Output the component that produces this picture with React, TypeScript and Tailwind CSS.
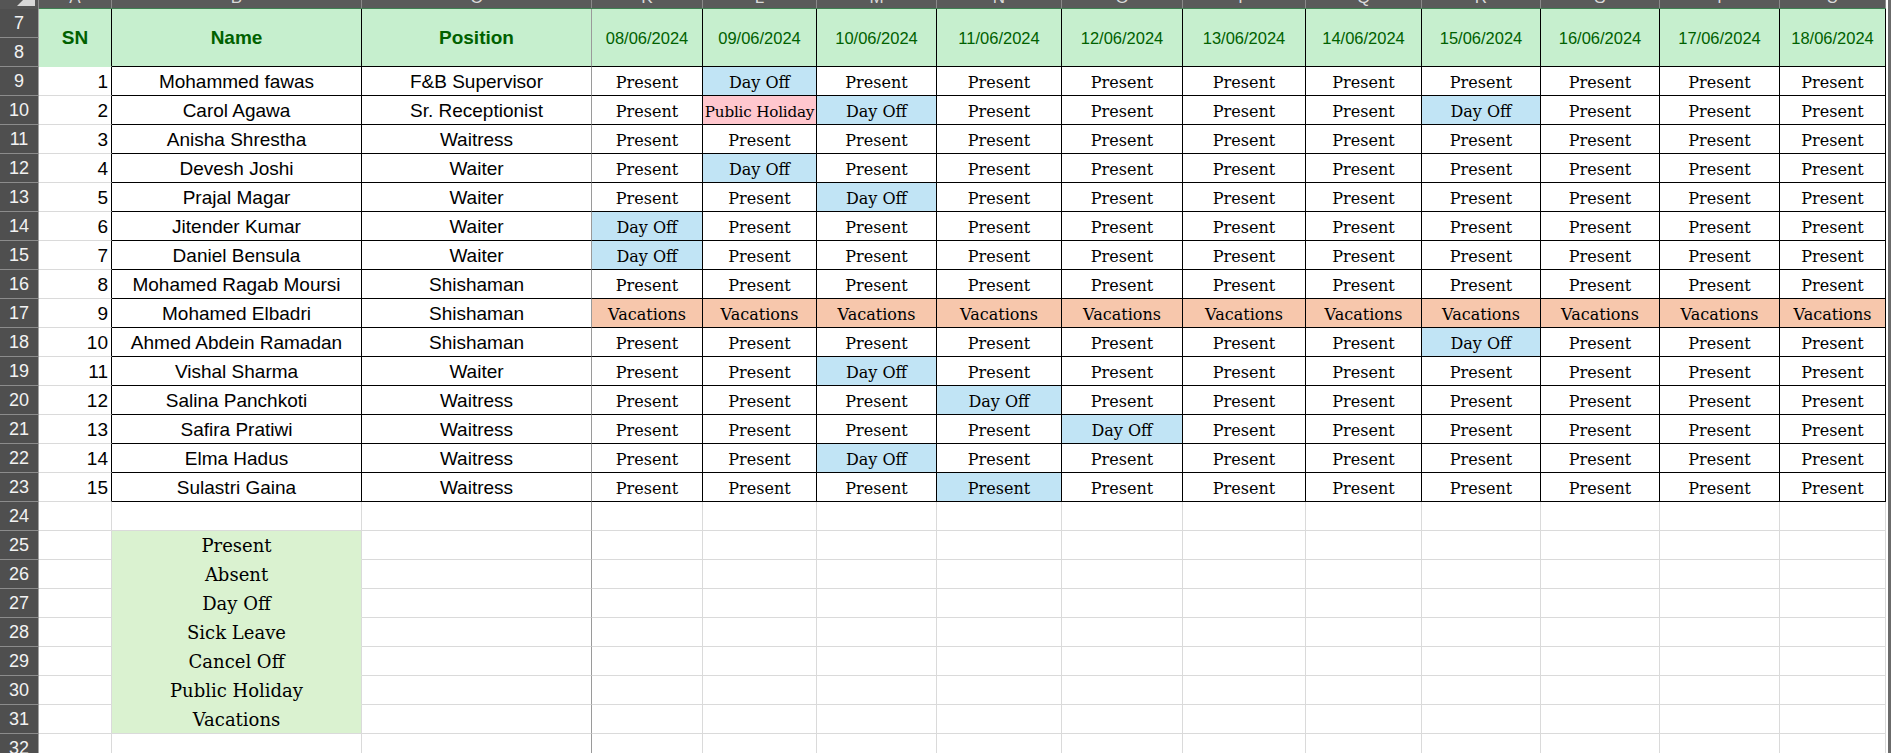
import clsx from 'clsx'

const SANS = "font-['Liberation_Sans',Arial,sans-serif]"
const SERIF = "font-['DejaVu_Serif','Liberation_Serif',serif]"

const COLS = [
  { w: 'w-[111px]', l: 'K', d: '08/06/2024' },
  { w: 'w-[114px]', l: 'L', d: '09/06/2024' },
  { w: 'w-[120px]', l: 'M', d: '10/06/2024' },
  { w: 'w-[125px]', l: 'N', d: '11/06/2024' },
  { w: 'w-[121px]', l: 'O', d: '12/06/2024' },
  { w: 'w-[123px]', l: 'P', d: '13/06/2024' },
  { w: 'w-[116px]', l: 'Q', d: '14/06/2024' },
  { w: 'w-[119px]', l: 'R', d: '15/06/2024' },
  { w: 'w-[119px]', l: 'S', d: '16/06/2024' },
  { w: 'w-[120px]', l: 'T', d: '17/06/2024' },
  { w: 'w-[106px]', l: 'U', d: '18/06/2024' },
]

// P present, D day off, H public holiday, V vacations, B present on blue
const ROWS: [number, string, string, string][] = [
  [1, 'Mohammed fawas', 'F&B Supervisor', 'PDPPPPPPPPP'],
  [2, 'Carol Agawa', 'Sr. Receptionist', 'PHDPPPPDPPP'],
  [3, 'Anisha Shrestha', 'Waitress', 'PPPPPPPPPPP'],
  [4, 'Devesh Joshi', 'Waiter', 'PDPPPPPPPPP'],
  [5, 'Prajal Magar', 'Waiter', 'PPDPPPPPPPP'],
  [6, 'Jitender Kumar', 'Waiter', 'DPPPPPPPPPP'],
  [7, 'Daniel Bensula', 'Waiter', 'DPPPPPPPPPP'],
  [8, 'Mohamed Ragab Moursi', 'Shishaman', 'PPPPPPPPPPP'],
  [9, 'Mohamed Elbadri', 'Shishaman', 'VVVVVVVVVVV'],
  [10, 'Ahmed Abdein Ramadan', 'Shishaman', 'PPPPPPPDPPP'],
  [11, 'Vishal Sharma', 'Waiter', 'PPDPPPPPPPP'],
  [12, 'Salina Panchkoti', 'Waitress', 'PPPDPPPPPPP'],
  [13, 'Safira Pratiwi', 'Waitress', 'PPPPDPPPPPP'],
  [14, 'Elma Hadus', 'Waitress', 'PPDPPPPPPPP'],
  [15, 'Sulastri Gaina', 'Waitress', 'PPPBPPPPPPP'],
]

const STATUS: Record<string, { text: string; cls: string }> = {
  P: { text: 'Present', cls: 'bg-white text-[16px]' },
  D: { text: 'Day Off', cls: 'bg-[#c1e4f5] text-[16px]' },
  H: { text: 'Public Holiday', cls: 'bg-[#ffc7ce] text-[15.2px] tracking-[-0.2px]' },
  V: { text: 'Vacations', cls: 'bg-[#f7c7ac] text-[16px]' },
  B: { text: 'Present', cls: 'bg-[#c1e4f5] text-[16px]' },
}

const LEGEND = ['Present', 'Absent', 'Day Off', 'Sick Leave', 'Cancel Off', 'Public Holiday', 'Vacations']

function RowNum({ n }: { n: number }) {
  return (
    <div className={clsx('w-[39px] h-[29px] shrink-0 box-border bg-[#4f4f4f] border-b border-b-[#8c8c8c] border-r border-r-[#a3a3a3] flex items-center justify-center pt-[1px] text-[18px] text-[#f2f2f2]', SANS)}>
      {n}
    </div>
  )
}

function TopBar() {
  const letters = [
    { w: 'w-[73px]', l: 'A' },
    { w: 'w-[250px]', l: 'B' },
    { w: 'w-[230px]', l: 'C' },
    ...COLS,
  ]
  return (
    <div className="flex h-[9px] shrink-0">
      <div className="w-[39px] h-[9px] bg-[#555555] border-r border-r-[#8a8a8a] box-border">
        <svg width="38" height="9" viewBox="0 0 38 9">
          <polygon points="17,6 35,6 35,-12" fill="#d8d8d8" />
        </svg>
      </div>
      <div className="flex h-[9px] border-b border-b-[#3f7f52] box-border bg-[#5a5a5a]">
        {letters.map((c) => (
          <div
            key={c.l}
            className={clsx(c.w, 'h-[8px] shrink-0 box-border border-r border-r-[#8a8a8a] overflow-hidden flex justify-center text-[17px] leading-[17px] text-[#d9d9d9]', SANS)}
          >
            <span className="block -mt-[11px]">{c.l}</span>
          </div>
        ))}
      </div>
    </div>
  )
}

function HeaderRow() {
  return (
    <div className="flex h-[58px] shrink-0">
      <div className="flex flex-col">
        <RowNum n={7} />
        <RowNum n={8} />
      </div>
      <div className={clsx('w-[73px] h-[58px] shrink-0 box-border bg-[#c6efce] border-r border-r-black border-b border-b-[#c6efce] flex items-center justify-center pt-[2px] text-[19px] font-bold text-[#006100]', SANS)}>
        SN
      </div>
      <div className={clsx('w-[250px] h-[58px] shrink-0 box-border bg-[#c6efce] border-r border-r-black border-b border-b-black flex items-center justify-center pt-[2px] text-[19px] font-bold text-[#006100]', SANS)}>
        Name
      </div>
      <div className={clsx('w-[230px] h-[58px] shrink-0 box-border bg-[#c6efce] border-r border-r-[#9a9a9a] border-b border-b-black flex items-center justify-center pt-[2px] text-[19px] font-bold text-[#006100]', SANS)}>
        Position
      </div>
      {COLS.map((c) => (
        <div
          key={c.d}
          className={clsx(c.w, 'h-[58px] shrink-0 box-border bg-[#c6efce] border-r border-r-black border-b border-b-black flex items-center justify-center pt-[1px] text-[16.5px] text-[#006100]', SANS)}
        >
          {c.d}
        </div>
      ))}
    </div>
  )
}

function DataRow({ row, n }: { row: [number, string, string, string]; n: number }) {
  const [sn, name, pos, codes] = row
  return (
    <div className="flex h-[29px] shrink-0">
      <RowNum n={n} />
      <div className={clsx('w-[73px] h-[29px] shrink-0 box-border border-b border-b-[#dadada] border-r border-r-black flex items-end justify-end pr-[3px] pb-[2px] text-[19px] leading-[22px]', SANS)}>
        {sn}
      </div>
      <div className={clsx('w-[250px] h-[29px] shrink-0 box-border border-b border-b-black border-r border-r-black flex items-end justify-center pb-[2px] text-[19px] leading-[22px] whitespace-nowrap', SANS)}>
        {name}
      </div>
      <div className={clsx('w-[230px] h-[29px] shrink-0 box-border border-b border-b-black border-r border-r-[#9a9a9a] flex items-end justify-center pb-[2px] text-[19px] leading-[22px] whitespace-nowrap', SANS)}>
        {pos}
      </div>
      {COLS.map((c, i) => {
        const s = STATUS[codes[i]]
        return (
          <div
            key={c.d}
            className={clsx(c.w, s.cls, 'h-[29px] shrink-0 box-border border-b border-b-black border-r border-r-black flex items-end justify-center pb-[2px] leading-[20px] whitespace-nowrap overflow-hidden', SERIF)}
          >
            {s.text}
          </div>
        )
      })}
    </div>
  )
}

function EmptyRow({ n }: { n: number }) {
  const legend = n >= 25 && n <= 31 ? LEGEND[n - 25] : null
  return (
    <div className="flex h-[29px] shrink-0">
      <RowNum n={n} />
      <div className="w-[73px] h-[29px] shrink-0 box-border border-b border-b-[#dadada] border-r border-r-[#dadada]" />
      <div
        className={clsx(
          'w-[250px] h-[29px] shrink-0 box-border border-r border-r-[#dadada] border-b flex items-end justify-center pb-[2px] text-[18px] leading-[22px] whitespace-nowrap',
          SERIF,
          legend && n < 31 ? 'bg-[#daf2d0] border-b-[#daf2d0]' : legend ? 'bg-[#daf2d0] border-b-[#dadada]' : 'border-b-[#dadada]',
        )}
      >
        {legend}
      </div>
      <div className="w-[230px] h-[29px] shrink-0 box-border border-b border-b-[#dadada] border-r border-r-[#9a9a9a]" />
      {COLS.map((c) => (
        <div key={c.d} className={clsx(c.w, 'h-[29px] shrink-0 box-border border-b border-b-[#dadada] border-r border-r-[#dadada]')} />
      ))}
    </div>
  )
}

export default function App() {
  return (
    <div className="w-[1891px] h-[753px] overflow-hidden bg-white flex text-black">
      <div className="w-[1886px] shrink-0 flex flex-col">
        <TopBar />
        <HeaderRow />
        {ROWS.map((r, i) => (
          <DataRow key={r[0]} row={r} n={9 + i} />
        ))}
        {[24, 25, 26, 27, 28, 29, 30, 31, 32].map((n) => (
          <EmptyRow key={n} n={n} />
        ))}
      </div>
      <div className="flex-1 border-l-2 border-l-white bg-[#6b6b6b]" />
    </div>
  )
}
